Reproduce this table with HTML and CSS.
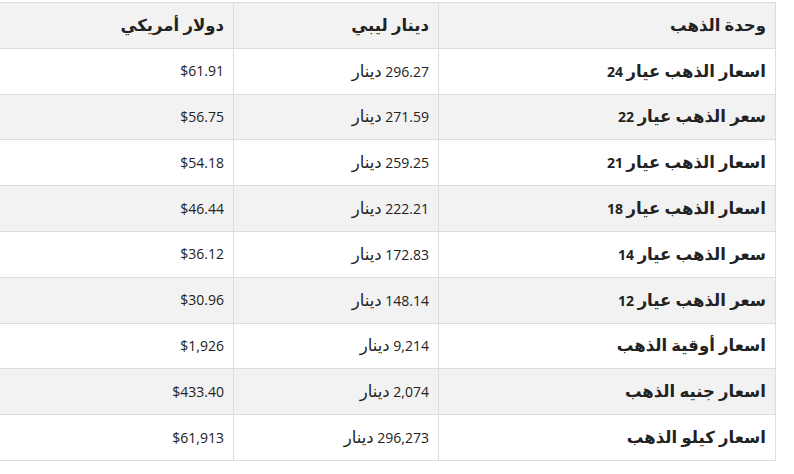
FILE: index.html
```html
<!DOCTYPE html>
<html lang="ar" dir="rtl">
<head>
<meta charset="utf-8">
<link rel="stylesheet" href="styles.css">
</head>
<body>
<div class="wrap">
<table class="prices">
<thead>
<tr><th class="c1"><span class="ar">وحدة الذهب</span></th><th class="c2"><span class="ar">دينار ليبي</span></th><th class="c3"><span class="ar">دولار أمريكي</span></th></tr>
</thead>
<tbody>
<tr><td class="c1"><span class="ar">اسعار الذهب عيار</span> 24</td><td class="c2">296.27 <span class="ar">دينار</span></td><td class="c3">$61.91</td></tr>
<tr><td class="c1"><span class="ar">سعر الذهب عيار</span> 22</td><td class="c2">271.59 <span class="ar">دينار</span></td><td class="c3">$56.75</td></tr>
<tr><td class="c1"><span class="ar">اسعار الذهب عيار</span> 21</td><td class="c2">259.25 <span class="ar">دينار</span></td><td class="c3">$54.18</td></tr>
<tr><td class="c1"><span class="ar">اسعار الذهب عيار</span> 18</td><td class="c2">222.21 <span class="ar">دينار</span></td><td class="c3">$46.44</td></tr>
<tr><td class="c1"><span class="ar">سعر الذهب عيار</span> 14</td><td class="c2">172.83 <span class="ar">دينار</span></td><td class="c3">$36.12</td></tr>
<tr><td class="c1"><span class="ar">سعر الذهب عيار</span> 12</td><td class="c2">148.14 <span class="ar">دينار</span></td><td class="c3">$30.96</td></tr>
<tr><td class="c1"><span class="ar">اسعار أوقية الذهب</span></td><td class="c2">9,214 <span class="ar">دينار</span></td><td class="c3">$1,926</td></tr>
<tr><td class="c1"><span class="ar">اسعار جنيه الذهب</span></td><td class="c2">2,074 <span class="ar">دينار</span></td><td class="c3">$433.40</td></tr>
<tr><td class="c1"><span class="ar">اسعار كيلو الذهب</span></td><td class="c2">296,273 <span class="ar">دينار</span></td><td class="c3">$61,913</td></tr>
</tbody>
</table>
</div>
</body>
</html>
```
FILE: styles.css
```css
html, body {
  margin: 0;
  padding: 0;
  background: #ffffff;
}
body {
  overflow: hidden;
  font-family: "Open Sans", "DejaVu Sans", sans-serif;
  color: #222222;
}
.wrap {
  direction: rtl;
  padding-right: 18px;
  padding-top: 2px;
  overflow: hidden;
}
.prices {
  border-collapse: collapse;
  width: 790px;
  table-layout: fixed;
  font-size: 14px;
}
.prices th,
.prices td {
  border: 1px solid #dddddd;
  height: 44.8px;
  padding: 0 9px;
  text-align: right;
  vertical-align: middle;
  line-height: 20px;
}
.prices th {
  background: #f2f2f2;
  font-weight: bold;
}
.prices tbody tr:nth-child(even) td {
  background: #f2f2f2;
}
.prices td.c1 {
  font-weight: bold;
}
.prices .c1 { width: 318px; }
.prices .c2 { width: 186px; }
.ar {
  font-size: 16.5px;
}
```
